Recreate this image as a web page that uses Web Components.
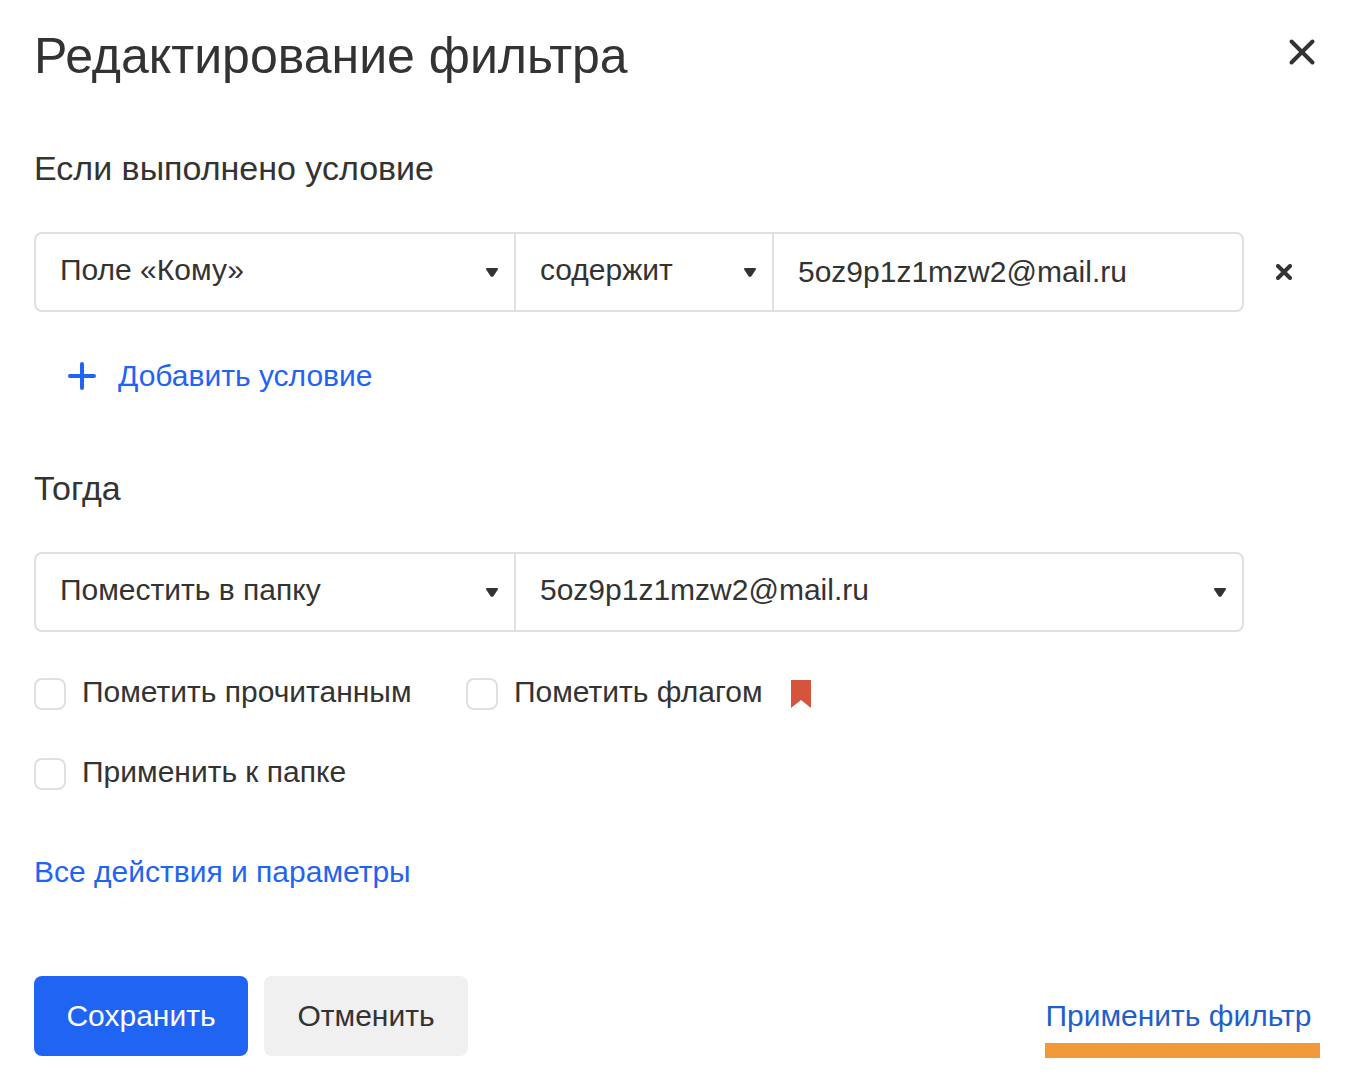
<!DOCTYPE html>
<html lang="ru">
<head>
<meta charset="utf-8">
<meta name="viewport" content="width=device-width, initial-scale=1">
<title>Редактирование фильтра</title>
<style>
  body {
    margin: 0;
    background: #fff;
    color: #333;
    font: 30px/40px "Liberation Sans", Arial, sans-serif;
    --line: #e0e0e0;
    --accent: #1f64f2;
  }
</style>
</head>
<body>
<filter-dialog heading="Редактирование фильтра">
  <filter-section heading="Если выполнено условие">
    <field-group removable>
      <select-field class="lead" label="Поле письма" options="Поле «Кому»|Поле «От»|Поле «Тема»"></select-field>
      <select-field class="mid" label="Условие" options="содержит|не содержит"></select-field>
      <text-field class="rest" label="Значение" value="5oz9p1z1mzw2@mail.ru"></text-field>
    </field-group>
    <add-button>Добавить условие</add-button>
  </filter-section>
  <filter-section heading="Тогда">
    <field-group>
      <select-field class="lead" label="Действие" options="Поместить в папку|Удалить навсегда"></select-field>
      <select-field class="rest" label="Папка" options="5oz9p1z1mzw2@mail.ru|Входящие"></select-field>
    </field-group>
    <option-list>
      <check-option>Пометить прочитанным</check-option>
      <check-option>Пометить флагом<flag-icon slot="icon"></flag-icon></check-option>
      <check-option>Применить к папке</check-option>
    </option-list>
  </filter-section>
  <text-link class="more">Все действия и параметры</text-link>
  <action-button slot="actions" kind="primary">Сохранить</action-button>
  <action-button slot="actions">Отменить</action-button>
  <text-link slot="apply" marked>Применить фильтр</text-link>
</filter-dialog>

<script>
const RESET = `
  *, ::before, ::after { box-sizing: border-box; }
  button, input, select { font: inherit; color: inherit; margin: 0; }
  button { border: 0; padding: 0; background: none; cursor: pointer; }
  svg { display: block; flex: none; }
`;

class BaseElement extends HTMLElement {
  connectedCallback() {
    if (this.shadowRoot) return;
    this.attachShadow({ mode: 'open' }).innerHTML =
      `<style>${RESET}${this.styles()}</style>${this.markup()}`;
  }
  attr(name) { return this.getAttribute(name) || ''; }
}

customElements.define('filter-dialog', class extends BaseElement {
  styles() { return `
    :host { display: block; padding: 28px 34px; }
    header { display: flex; justify-content: space-between; align-items: flex-start; margin-bottom: 64px; }
    h1 { margin: 0; font-size: 50px; line-height: 56px; font-weight: 400; }
    header button { padding: 10px 0; }
    main { display: flex; flex-direction: column; align-items: stretch; }
    ::slotted(filter-section) { margin-bottom: 72px; }
    ::slotted(filter-section:last-of-type) { margin-bottom: 60px; }
    footer { display: flex; align-items: center; gap: 16px; margin-top: 84px; }
    .apply { margin-left: auto; }
  `; }
  markup() { return `
    <header>
      <h1>${this.attr('heading')}</h1>
      <button type="button" aria-label="Закрыть">
        <svg width="28" height="28" viewBox="0 0 28 28" fill="none" stroke="currentColor" stroke-width="4" stroke-linecap="round"><path d="M3.500 3.500l21 21M24.500 3.500l-21 21"/></svg>
      </button>
    </header>
    <main><slot></slot></main>
    <footer><slot name="actions"></slot><div class="apply"><slot name="apply"></slot></div></footer>
  `; }
});

customElements.define('filter-section', class extends BaseElement {
  styles() { return `
    :host { display: block; }
    h2 { margin: 0 0 44px; font-size: 34px; line-height: 40px; font-weight: 400; }
  `; }
  markup() { return `<h2>${this.attr('heading')}</h2><slot></slot>`; }
});

customElements.define('field-group', class extends BaseElement {
  styles() { return `
    :host { display: flex; align-items: center; gap: 20px; padding-right: 72px; }
    :host([removable]) { padding-right: 12px; }
    .fields { display: flex; flex: 1; min-width: 0; height: 80px; border: 2px solid var(--line); border-radius: 8px; }
    ::slotted(*) { min-width: 0; }
    ::slotted(.lead) { flex: 0 1 480px; }
    ::slotted(.mid) { flex: 0 1 258px; }
    ::slotted(.rest) { flex: 1 1 0; }
    ::slotted(:not(.rest)) { border-right: 2px solid var(--line); }
    button { display: grid; place-items: center; width: 40px; height: 40px; }
  `; }
  markup() { return `
    <div class="fields"><slot></slot></div>
    ${this.hasAttribute('removable') ? `
    <button type="button" aria-label="Удалить условие">
      <svg width="16" height="16" viewBox="0 0 16 16" fill="none" stroke="currentColor" stroke-width="4" stroke-linecap="round"><path d="M2 2l12 12M14 2L2 14"/></svg>
    </button>` : ''}
  `; }
});

customElements.define('select-field', class extends BaseElement {
  styles() { return `
    :host { display: grid; box-sizing: border-box; align-items: center; }
    select, svg { grid-area: 1 / 1; }
    select { appearance: none; width: 100%; height: 100%; border: 0; border-radius: 6px; background: none; padding: 0 40px 4px 24px; outline-offset: -2px; }
    svg { justify-self: end; margin-right: 16px; pointer-events: none; }
  `; }
  markup() { return `
    <select aria-label="${this.attr('label')}">
      ${this.attr('options').split('|').map(o => `<option>${o}</option>`).join('')}
    </select>
    <svg width="12" height="10" viewBox="0 0 12 10" fill="currentColor" stroke="currentColor" stroke-width="2" stroke-linejoin="round"><path d="M1 2h10L6.600 8.800h-1.200z"/></svg>
  `; }
});

customElements.define('text-field', class extends BaseElement {
  styles() { return `
    :host { display: block; }
    input { display: block; width: 100%; height: 100%; border: 0; border-radius: 6px; background: none; padding: 0 24px; outline-offset: -2px; }
  `; }
  markup() { return `<input type="text" aria-label="${this.attr('label')}" value="${this.attr('value')}">`; }
});

customElements.define('add-button', class extends BaseElement {
  styles() { return `
    :host { display: block; margin-top: 44px; padding-left: 34px; color: var(--accent); }
    button { display: flex; align-items: center; gap: 22px; }
  `; }
  markup() { return `
    <button type="button">
      <svg width="28" height="28" viewBox="0 0 28 28" fill="none" stroke="currentColor" stroke-width="4" stroke-linecap="round"><path d="M14 2v24M2 14h24"/></svg>
      <span><slot></slot></span>
    </button>
  `; }
});

customElements.define('option-list', class extends BaseElement {
  styles() { return `
    :host { display: grid; grid-template-columns: 384px max-content; gap: 40px 48px; margin-top: 40px; }
  `; }
  markup() { return `<slot></slot>`; }
});

customElements.define('check-option', class extends BaseElement {
  styles() { return `
    :host { display: block; }
    label { display: flex; align-items: flex-start; gap: 16px; white-space: nowrap; cursor: pointer; }
    input { appearance: none; flex: none; width: 32px; height: 32px; margin-top: 6px; border: 2px solid var(--line); border-radius: 8px; background: #fff; }
    input:checked { background: var(--accent); border-color: var(--accent); }
    ::slotted([slot="icon"]) { margin: 8px 0 0 12px; }
  `; }
  markup() { return `<label><input type="checkbox"><span><slot></slot></span><slot name="icon"></slot></label>`; }
});

customElements.define('flag-icon', class extends BaseElement {
  styles() { return `:host { display: block; color: #d6533c; }`; }
  markup() { return `<svg width="20" height="28" viewBox="0 0 20 28" fill="currentColor" aria-hidden="true"><path d="M0 0h20v28l-10-8-10 8z"/></svg>`; }
});

customElements.define('action-button', class extends BaseElement {
  styles() { return `
    :host { display: block; }
    button { min-width: 204px; height: 80px; padding: 0 32px; border-radius: 8px; background: #f0f0f0; }
    :host([kind="primary"]) button { min-width: 214px; background: var(--accent); color: #fff; }
  `; }
  markup() { return `<button type="button"><slot></slot></button>`; }
});

customElements.define('text-link', class extends BaseElement {
  styles() { return `
    :host { display: block; color: var(--accent); }
    a { color: inherit; text-decoration: none; }
    :host([marked]) { position: relative; min-width: 275px; color: #1f5fcc; text-align: center; }
    :host([marked])::after { content: ""; position: absolute; top: 47px; left: 4px; right: -4px; height: 15px; background: #f19838; }
  `; }
  markup() { return `<a href="#"><slot></slot></a>`; }
});
</script>
</body>
</html>
